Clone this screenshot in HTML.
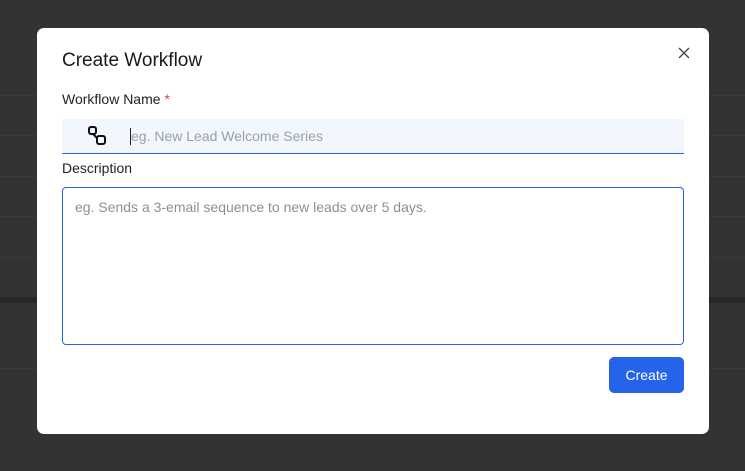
<!DOCTYPE html>
<html><head><style>
body{margin:0;width:745px;height:471px;background:#333;position:relative;overflow:hidden;font-family:"Liberation Sans",sans-serif}
.bg{position:absolute;left:0;right:0}
.m{position:absolute;left:37px;top:28px;width:672px;height:406px;background:#fff;border-radius:7px}
.t{position:absolute;left:25px;top:22px;font-size:19px;color:#1a1a1a}
.l{position:absolute;left:25px;font-size:14px;color:#222}
.in{position:absolute;left:25px;top:91px;width:622px;height:34px;background:#f2f6fd;border-bottom:1.5px solid #2563eb}
.ta{position:absolute;left:25px;top:159px;width:620px;height:156px;border:1px solid #2563eb;border-radius:4px}
.btn{position:absolute;left:572px;top:329px;width:75px;height:36px;background:#2563eb;border-radius:5px;color:#fff;font-size:14px;text-align:center;line-height:36px}
</style></head><body>
<div class="bg" style="top:95px;height:1px;background:#3a3a3a"></div>
<div class="bg" style="top:135px;height:1px;background:#3a3a3a"></div>
<div class="bg" style="top:176px;height:1px;background:#3a3a3a"></div>
<div class="bg" style="top:216px;height:1px;background:#3a3a3a"></div>
<div class="bg" style="top:257px;height:1px;background:#3a3a3a"></div>
<div class="bg" style="top:297px;height:6px;background:#262626"></div>
<div class="bg" style="top:368px;height:1px;background:#3a3a3a"></div>
<div class="m">
<div class="t">Create Workflow</div>
<svg style="position:absolute;left:641px;top:19px" width="12" height="12" viewBox="0 0 12 12"><path d="M1 1L11 11M11 1L1 11" stroke="#444" stroke-width="1.3"/></svg>
<div class="l" style="top:63px">Workflow Name <span style="color:#e53e3e">*</span></div>
<div class="in">
<svg style="position:absolute;left:25px;top:6px" width="22" height="22" viewBox="0 0 22 22"><rect x="2" y="2" width="7" height="7" rx="2" fill="none" stroke="#111" stroke-width="2"/><rect x="10" y="11" width="8" height="8" rx="2" fill="none" stroke="#111" stroke-width="2"/><path d="M6 9L10 13" fill="none" stroke="#111" stroke-width="2"/></svg>
<div style="position:absolute;left:68px;top:9px;width:1px;height:17px;background:#222"></div>
<div style="position:absolute;left:69px;top:9px;font-size:14px;color:#9aa1ab">eg. New Lead Welcome Series</div>
</div>
<div class="l" style="top:132px">Description</div>
<div class="ta"><div style="position:absolute;left:12px;top:11px;font-size:14px;color:#8a909a">eg. Sends a 3-email sequence to new leads over 5 days.</div></div>
<div class="btn">Create</div>
</div>
</body></html>
